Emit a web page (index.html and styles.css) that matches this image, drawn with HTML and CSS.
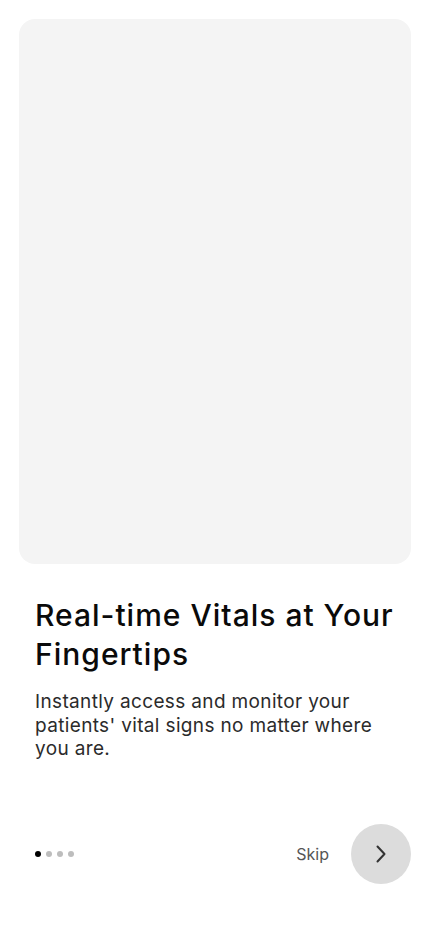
FILE: index.html
```html
<!DOCTYPE html>
<html lang="en">
<head>
<meta charset="utf-8">
<meta name="viewport" content="width=device-width, initial-scale=1">
<title>Onboarding</title>
<link rel="stylesheet" href="styles.css">
</head>
<body>
<main class="screen">
  <div class="hero"></div>
  <section class="copy">
    <h1 class="title">Real-time Vitals at Your Fingertips</h1>
    <p class="desc">Instantly access and monitor your patients' vital signs no matter where you are.</p>
  </section>
  <footer class="controls">
    <div class="dots">
      <span class="dot active"></span>
      <span class="dot"></span>
      <span class="dot"></span>
      <span class="dot"></span>
    </div>
    <div class="actions">
      <button class="skip" type="button">Skip</button>
      <button class="next" type="button" aria-label="Next">
        <svg width="12" height="18" viewBox="0 0 12 18" fill="none"><path d="M2.5 1.5 L9.5 9 L2.5 16.5" stroke="#333" stroke-width="2" stroke-linecap="round" stroke-linejoin="round"/></svg>
      </button>
    </div>
  </footer>
</main>
</body>
</html>
```
FILE: styles.css
```css
* { box-sizing: border-box; }
html, body { margin: 0; padding: 0; background: #fff; }
body { font-family: Inter, "Noto Sans", sans-serif; color: #111; }
.screen {
  width: 430px;
  height: 932px;
  padding: 19px 19px 0 19px;
  display: flex;
  flex-direction: column;
}
.hero {
  height: 545px;
  background: #f4f4f4;
  border-radius: 16px;
}
.copy {
  padding: 32px 16px 0 16px;
}
.title {
  margin: 0;
  font-size: 30px;
  line-height: 39px;
  font-weight: 500;
  color: #0a0a0a;
  letter-spacing: 1px;
}
.desc {
  margin: 16px 0 0 0;
  font-size: 19px;
  line-height: 23.5px;
  color: #2b2b2b;
  font-weight: 400;
  letter-spacing: 0.35px;
}
.controls {
  margin-top: 63px;
  display: flex;
  align-items: center;
  justify-content: space-between;
  padding-left: 16px;
}
.dots {
  display: flex;
  gap: 5px;
}
.dot {
  width: 6px;
  height: 6px;
  border-radius: 50%;
  background: #bdbdbd;
}
.dot.active { background: #000; }
.actions {
  display: flex;
  align-items: center;
  gap: 22px;
}
.skip {
  border: 0;
  background: none;
  padding: 0;
  font-family: Inter, "Noto Sans", sans-serif;
  font-size: 16px;
  color: #555;
}
.next {
  width: 60px;
  height: 60px;
  border-radius: 50%;
  border: 0;
  background: #dcdcdc;
  display: flex;
  align-items: center;
  justify-content: center;
  padding: 0;
}
```
